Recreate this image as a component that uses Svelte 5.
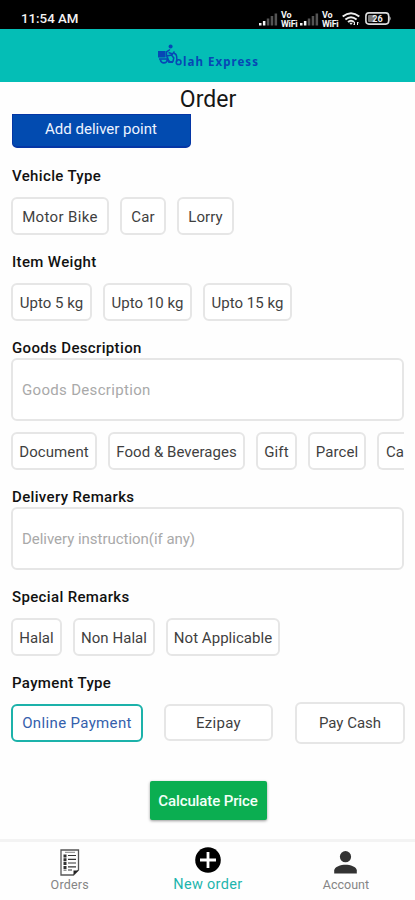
<script>
  const vehicles = [['Motor Bike', 98, 0.35], ['Car', 46, 0.2], ['Lorry', 57, 0.1]];
  const weights = [['Upto 5 kg', 81, 0.05], ['Upto 10 kg', 89, 0.05], ['Upto 15 kg', 89, 0.05]];
  const goods = [['Document', 86, 0.1], ['Food & Beverages', 137, 0.03], ['Gift', 41, 0.1], ['Parcel', 58, 0.1], ['Ca', 34, 0]];
  const remarks = [['Halal', 51, 0], ['Non Halal', 82, 0.05], ['Not Applicable', 114, 0.03]];
</script>

{#snippet chips(items)}
  <div class="chips">
    {#each items as [text, width, spacing]}
      <button class="chip" style="width:{width}px;letter-spacing:{spacing}px">{text}</button>
    {/each}
  </div>
{/snippet}

{#snippet signal(lit)}
  <svg class="signal" width="19" height="13" viewBox="0 0 19 13">
    {#each [2.5, 4.5, 7, 9.5, 12] as h, i}
      <rect x={i * 3.9} y={12.5 - h} width="2.5" height={h} fill={i < lit ? '#f4f4f4' : '#545454'} />
    {/each}
  </svg>
{/snippet}

<div class="screen">
  <div class="status">
    <span class="time">11:54 AM</span>
    <div class="indicators">
      {@render signal(2)}
      <span class="vo">Vo<br />WiFi</span>
      {@render signal(2)}
      <span class="vo">Vo<br />WiFi</span>
      <svg class="wifi" width="18" height="14" viewBox="0 0 18 14" fill="none" stroke="#eee" stroke-width="1.9">
        <path d="M.7 4.5Q9-2.2 17.3 4.5M3.4 7.5Q9 2.8 14.6 7.5M6 10Q9 7.5 12 10" />
        <path d="M7.3 10.8h3.4L9 13z" fill="#eee" stroke="none" />
        <path d="M12.5 10v3m-1.2-1.2 1.2 1.2M15.5 13v-3m1.2 1.2-1.2-1.2" stroke-width="1" />
      </svg>
      <svg width="27" height="13" viewBox="0 0 27 13">
        <rect x=".9" y=".9" width="22.8" height="11.2" rx="3" fill="none" stroke="#ddd" stroke-width="1.6" />
        <rect x="3" y="3" width="7" height="7" rx="1" fill="#777" />
        <path d="M24.5 4q2.3 2.5 0 5z" fill="#ddd" />
        <text x="12.5" y="9.8" text-anchor="middle" font-size="9" font-weight="700" fill="#eee">26</text>
      </svg>
    </div>
  </div>

  <header>
    <svg width="25" height="24" viewBox="0 0 25 24" fill="none" stroke="#0747b5" stroke-width="1.5">
      <path d="M0 7h7.5v6.500H0z" fill="#0747b5" stroke="none" />
      <circle cx="12.6" cy="2.500" r="2" fill="#0747b5" stroke="none" />
      <path d="M12 5.500 8.500 8v4l5-1 2.300 3-1 4M10.500 8.500l4 1.500 2-2.500M1 15h8l3 3" />
      <path d="M2.500 15.500a3.400 3.400 0 0 0 6.800 0M9 12.500l2 5.500h4" stroke-width="1.800" />
      <path d="M16 9.500c3 0 3 4 2.700 8.500" />
      <circle cx="20.6" cy="18.200" r="2.400" />
    </svg>
    <span>lah Express</span>
  </header>

  <h1>Order</h1>

  <main>
    <button class="add">Add deliver point</button>

    <h2 class="first">Vehicle Type</h2>
    {@render chips(vehicles)}

    <h2>Item Weight</h2>
    {@render chips(weights)}

    <h2 class="tight">Goods Description</h2>
    <div class="field">Goods Description</div>
    <div class="scroller">{@render chips(goods)}</div>

    <h2 class="tight">Delivery Remarks</h2>
    <div class="field delivery">Delivery instruction(if any)</div>

    <h2>Special Remarks</h2>
    {@render chips(remarks)}

    <h2>Payment Type</h2>
    <div class="payments">
      <button class="chip online">Online Payment</button>
      <button class="chip ezipay">Ezipay</button>
      <button class="chip cash">Pay Cash</button>
    </div>

    <button class="calculate">Calculate Price</button>
  </main>

  <nav>
    <div class="tab">
      <svg width="20" height="27" viewBox="0 0 20 27" fill="none" stroke="#333">
        <path d="M1 1h17.500v20l-5 5H1z" stroke="#555" stroke-width="1.300" />
        <path d="M5 3.300h10" stroke="#888" />
        <path d="M5 5.500v16" stroke-width="3" stroke-dasharray="3 .8" />
        <path d="M8 6.500h8M8 10.300h8M8 14h8M8 17.800h8M8 21h4" stroke-width="1.200" />
        <path d="M13.500 26v-4.500h5z" fill="#222" stroke="none" />
      </svg>
      <span>Orders</span>
    </div>
    <div class="tab active">
      <svg width="26" height="26" viewBox="0 0 26 26">
        <circle cx="13" cy="13" r="12.800" fill="#000" />
        <path d="M13 5v16M5 13h16" stroke="#fff" stroke-width="2.800" />
      </svg>
      <span>New order</span>
    </div>
    <div class="tab account">
      <svg width="23" height="23" viewBox="0 0 23 23" fill="#333">
        <circle cx="11.500" cy="5.700" r="5.600" />
        <path d="M.2 22.500v-3C.2 15.500 7 13.700 11.500 13.700S22.800 15.500 22.800 19.500v3z" />
      </svg>
      <span>Account</span>
    </div>
  </nav>
</div>

<style>
  :global(body) { background: #fff; }
  .screen {
    width: 415px; height: 900px; overflow: hidden; background: #fefefe;
    display: flex; flex-direction: column;
    font-family: Roboto, "Liberation Sans", sans-serif;
  }
  button { font-family: inherit; margin: 0; padding: 0; box-sizing: border-box; white-space: nowrap; }
  .status {
    height: 29px; flex: none; background: #000; color: #f4f4f4; box-sizing: border-box;
    padding: 9px 23px 0 21px; display: flex; justify-content: space-between;
  }
  .time { font-size: 13.300px; line-height: 20px; font-weight: 500; }
  .indicators { display: flex; align-items: flex-start; padding-top: 3px; }
  .signal { margin-top: 1px; }
  .vo { font-size: 9px; line-height: 8.500px; font-weight: 700; width: 17px; margin: -1px 2px 0 3px; letter-spacing: -0.3px; }
  .wifi { margin: 0 5px 0 1px; }
  header {
    height: 53px; flex: none; background: #04beb6; display: flex; box-sizing: border-box;
    padding: 14.500px 0 0 158px; color: #0747b5;
  }
  header span { font: 700 11.500px/16px "Noto Sans", sans-serif; letter-spacing: 1.05px; margin-top: 10px; }
  h1 { margin: 0; height: 32px; flex: none; font-size: 23px; line-height: 35px; font-weight: 400; text-align: center; color: #161616; padding-left: 1px; }
  main { flex: 1; min-height: 0; overflow: hidden; padding: 0 11px; display: flex; flex-direction: column; }
  .add {
    flex: none; width: 179px; height: 34px; margin-left: 0.500px; border: solid #0536a5; border-width: 1px 1px 2px;
    border-radius: 0 0 5px 5px; background: #024bb0; color: #edf3ff; font-size: 15px; padding-bottom: 4px;
  }
  h2 { flex: none; margin: 17px 0 11px 1px; font-size: 15px; line-height: 20px; height: 20px; font-weight: 500; letter-spacing: 0.35px; color: #111; }
  h2.first { margin-top: 18px; }
  h2.tight { margin-bottom: 0; }
  .chips { flex: none; display: flex; gap: 11px; height: 38px; }
  .chip {
    flex: none; border: 2px solid #e6e6e6; border-radius: 6px; background: #fff; color: #3f3f3f;
    font-size: 15px; height: 38px; padding-top: 1px;
  }
  .scroller { flex: none; margin-top: 11px; overflow: hidden; }
  .scroller .chip:last-child { width: 27px !important; border-right: 0; border-radius: 6px 0 0 6px; text-align: left; padding-left: 7px; }
  .field {
    flex: none; box-sizing: border-box; height: 63px; border: 2px solid #e6e6e6; border-radius: 6px; background: #fff;
    color: #a9a9a9; font-size: 15px; line-height: 61px; padding-left: 9px; letter-spacing: 0.32px;
  }
  .delivery { letter-spacing: -0.03px; }
  .payments { flex: none; height: 41px; margin-top: -2px; display: flex; align-items: center; }
  .online { width: 132px; border-color: #1cb2aa; color: #3460ac; letter-spacing: 0.35px; }
  .ezipay { width: 109px; height: 37px; margin-left: 21px; letter-spacing: 0.3px; }
  .cash { width: 110px; height: 42px; margin-left: 22px; }
  .calculate {
    flex: none; width: 117px; height: 39px; margin: 38px 0 0 138.500px; border: 0; border-radius: 2px; padding-top: 1px;
    background: #0bae51; color: #f4fff8; font-size: 15px; font-weight: 500; letter-spacing: -0.12px; box-shadow: 0 1px 3px #0006;
  }
  nav { flex: none; height: 61px; box-sizing: border-box; border-top: 3px solid #f3f3f3; display: flex; padding-left: 0.700px; }
  .tab { width: 138.300px; display: flex; flex-direction: column; align-items: center; padding-top: 7px; color: #858585; font-size: 12.500px; box-sizing: border-box; }
  .tab span { line-height: 16px; margin-top: 1px; letter-spacing: 0.2px; }
  .active { padding-top: 5px; color: #1db5ad; font-size: 14.500px; }
  .active span { margin-top: 4px; letter-spacing: 0.3px; }
  .account { padding-top: 9px; }
  .account span { margin-top: 3px; letter-spacing: 0; }
</style>
